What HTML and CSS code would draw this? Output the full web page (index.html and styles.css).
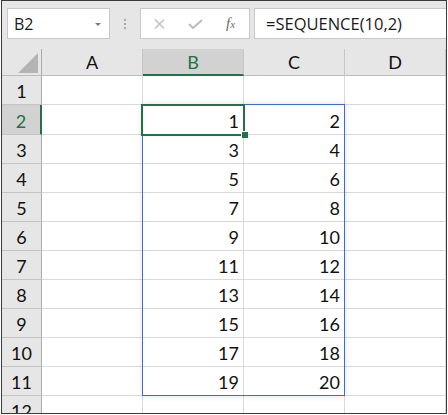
FILE: index.html
```html
<!DOCTYPE html>
<html>
<head>
<meta charset="utf-8">
<link rel="stylesheet" href="styles.css">
</head>
<body>
<div class="frame">
  <div class="toolbar">
    <div class="namebox"><span>B2</span><span class="arrow"></span></div>
    <div class="dots"><i></i><i></i><i></i></div>
    <div class="fxbox">
      <svg class="ico-x" width="11" height="10" viewBox="0 0 11 10"><path d="M1 0.5 L10 9.5 M10 0.5 L1 9.5" stroke="#bdbdbd" stroke-width="1.3" fill="none"/></svg>
      <svg class="ico-ok" width="15" height="10" viewBox="0 0 15 10"><path d="M1 5 L5 9 L14 1" stroke="#bdbdbd" stroke-width="2" fill="none"/></svg>
      <span class="fx"><i>f</i><i class="sub">x</i></span>
    </div>
    <div class="formula">=SEQUENCE(10,2)</div>
  </div>
  <div class="grid">
    <div class="corner"><svg width="40" height="27" viewBox="0 0 40 27"><polygon points="36,4 36,24 16,24" fill="#b4b4b4"/></svg></div>
    <div class="hdr">A</div><div class="hdr sel">B</div><div class="hdr">C</div><div class="hdr">D</div>

    <div class="rh">1</div><div class="c"></div><div class="c"></div><div class="c"></div><div class="c"></div>
    <div class="rh sel">2</div><div class="c"></div><div class="c">1</div><div class="c">2</div><div class="c"></div>
    <div class="rh">3</div><div class="c"></div><div class="c">3</div><div class="c">4</div><div class="c"></div>
    <div class="rh">4</div><div class="c"></div><div class="c">5</div><div class="c">6</div><div class="c"></div>
    <div class="rh">5</div><div class="c"></div><div class="c">7</div><div class="c">8</div><div class="c"></div>
    <div class="rh">6</div><div class="c"></div><div class="c">9</div><div class="c">10</div><div class="c"></div>
    <div class="rh">7</div><div class="c"></div><div class="c">11</div><div class="c">12</div><div class="c"></div>
    <div class="rh">8</div><div class="c"></div><div class="c">13</div><div class="c">14</div><div class="c"></div>
    <div class="rh">9</div><div class="c"></div><div class="c">15</div><div class="c">16</div><div class="c"></div>
    <div class="rh">10</div><div class="c"></div><div class="c">17</div><div class="c">18</div><div class="c"></div>
    <div class="rh">11</div><div class="c"></div><div class="c">19</div><div class="c">20</div><div class="c"></div>
    <div class="rh">12</div><div class="c"></div><div class="c"></div><div class="c"></div><div class="c"></div>

    <div class="spill"></div>
    <div class="active"></div>
    <div class="handle"></div>
  </div>
</div>
</body>
</html>
```

FILE: styles.css
```css
* { box-sizing: border-box; }
html, body { margin: 0; padding: 0; background: #ffffff; }
body { font-family: "Open Sans", "Noto Sans", sans-serif; }

.frame {
  margin-left: 1px;
  width: 446px;
  height: 414px;
  border: 1px solid #3a3a3a;
  overflow: hidden;
  background: #ffffff;
}

.toolbar {
  height: 48px;
  background: #e6e6e6;
  display: flex;
  align-items: flex-start;
  padding: 7px 0 0 5px;
}

.namebox {
  width: 103px;
  height: 31px;
  background: #ffffff;
  border: 1px solid #c8c8c8;
  display: flex;
  align-items: center;
  justify-content: space-between;
  padding: 0 8px 0 6px;
  font-size: 16px;
  color: #1a1a1a;
}
.arrow {
  width: 0; height: 0;
  border-left: 3px solid transparent;
  border-right: 3px solid transparent;
  border-top: 3px solid #7a7a7a;
  margin-top: 1px;
}

.dots {
  width: 30px;
  height: 31px;
  display: flex;
  flex-direction: column;
  align-items: center;
  justify-content: center;
  gap: 2px;
}
.dots i { display: block; width: 2px; height: 2px; background: #a8a8a8; }

.fxbox {
  width: 110px;
  height: 31px;
  background: #ffffff;
  border: 1px solid #c8c8c8;
  display: flex;
  align-items: center;
  padding-left: 13px;
}
.ico-x { margin-top: 1px; }
.ico-ok { margin-left: 23px; margin-top: 1px; }
.fx {
  margin-left: 23px;
  font-family: "Liberation Serif", serif;
  color: #6a6a6a;
  font-size: 15px;
  line-height: 1;
}
.fx .sub { font-size: 11px; }

.formula {
  flex: 1;
  height: 31px;
  margin-left: 4px;
  margin-right: -2px;
  background: #ffffff;
  border: 1px solid #c8c8c8;
  padding-left: 11px;
  font-size: 16.5px;
  line-height: 29px;
  color: #1a1a1a;
}

.grid {
  position: relative;
  display: grid;
  grid-template-columns: 40px 101px 101px 101px 101px;
  grid-template-rows: 27px 29px 30px repeat(10, 29px);
  font-family: "Lato", "Liberation Sans", sans-serif;
  font-size: 18px;
  color: #111;
}

.corner {
  background: #e6e6e6;
  border-right: 1px solid #ababab;
  border-bottom: 1px solid #bdbdbd;
}
.corner svg { display: block; }

.hdr {
  background: #e6e6e6;
  border-right: 1px solid #c6c6c6;
  border-bottom: 1px solid #bdbdbd;
  display: flex;
  align-items: flex-end;
  justify-content: center;
  line-height: 25px;
}
.hdr.sel {
  background: #d2d2d2;
  color: #217346;
  border-bottom: 2px solid #217346;
  line-height: 24px;
}

.rh {
  background: #e6e6e6;
  border-right: 1px solid #ababab;
  border-bottom: 1px solid #c4c4c4;
  display: flex;
  align-items: flex-end;
  justify-content: center;
  line-height: 26px;
}
.rh.sel {
  background: #d2d2d2;
  color: #217346;
  border-right: 2px solid #217346;
}

.c {
  border-right: 1px solid #d9d9d9;
  border-bottom: 1px solid #d9d9d9;
  display: flex;
  align-items: flex-end;
  justify-content: flex-end;
  padding-right: 4px;
  line-height: 26px;
}

.spill {
  position: absolute;
  left: 140px;
  top: 55px;
  width: 203px;
  height: 292px;
  border: 1px solid #3a6fd1;
  box-shadow: 0 0 6px rgba(0,0,0,0.12);
}
.active {
  position: absolute;
  left: 139px;
  top: 55px;
  width: 104px;
  height: 32px;
  border: 2px solid #217346;
}
.handle {
  position: absolute;
  left: 239px;
  top: 82px;
  width: 7px;
  height: 7px;
  background: #217346;
  border-left: 1px solid #ffffff;
  border-top: 1px solid #ffffff;
}
```
